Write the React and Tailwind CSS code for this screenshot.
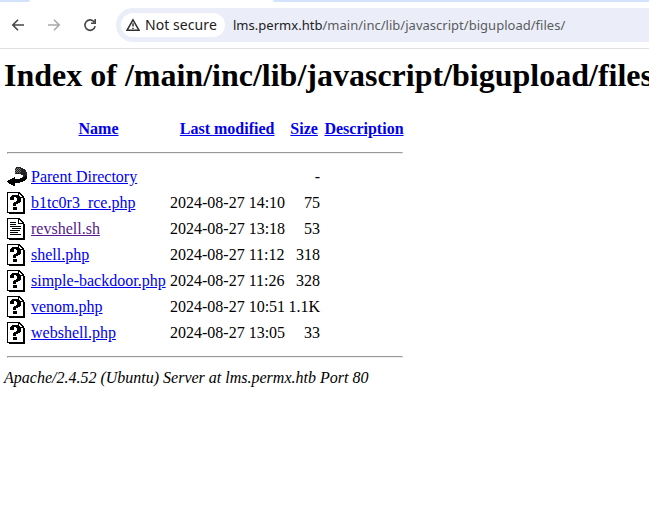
import React from 'react';

const files = [
  ['back', 'Parent Directory', '', '-'],
  ['unknown', 'b1tc0r3_rce.php', '2024-08-27 14:10', '75'],
  ['text', 'revshell.sh', '2024-08-27 13:18', '53'],
  ['unknown', 'shell.php', '2024-08-27 11:12', '318'],
  ['unknown', 'simple-backdoor.php', '2024-08-27 11:26', '328'],
  ['unknown', 'venom.php', '2024-08-27 10:51', '1.1K'],
  ['unknown', 'webshell.php', '2024-08-27 13:05', '33'],
];

function FileIcon({ type }) {
  if (type === 'back') {
    return (
      <svg width="20" height="22" viewBox="0 0 20 22" shapeRendering="crispEdges">
        <path d="M0 15h1v-1h2v-1h2v-1h2v-1h1v2h5v-1h2v-1h1V9h-2V8H8V2h1V1h5v1h2v1h2v1h1v2h1v7h-1v1h-1v1h-2v1h-3v1H8v3H6v-1H4v-1H2v-1H1v-1H0z" fill="#222" />
        <path d="M0 15h1v-1h2v-1h2v-1h2v-1h1v2h5v-1h3v-1h2v-1h2v3h-1v1h-1v1h-2v1h-3v1H8v3H6v-1H4v-1H2v-1H1v-1H0z" fill="#000" />
        <path d="M8 2h1v1H8zM10 2h1v1h-1zM12 2h1v1h-1zM9 3h1v1H9zM11 3h1v1h-1zM13 3h1v1h-1zM8 4h1v1H8zM10 4h1v1h-1zM12 4h1v1h-1zM9 5h1v1H9zM11 5h1v1h-1zM13 5h1v1h-1zM8 6h1v1H8zM10 6h1v1h-1zM12 6h1v1h-1z" fill="#777" />
      </svg>
    );
  }
  return (
    <svg width="20" height="22" viewBox="0 0 20 22" shapeRendering="crispEdges">
      <path d="M2 21.5H18M17.5 6V22" fill="none" stroke="#000" />
      <path d="M.5 .5H12L16.5 5V20.5H.5Z" fill="#fff" stroke="#000" />
      <path d="M11.5 .5V5.5H17M13.5 2v1M15.5 4v1" fill="none" stroke="#000" />
      {type === 'text' ? (
        <path d="M3 4.5h6M3 6.5h6M3 8.5h11M5 10.5h9M3 12.5h10M3 14.5h8M3 16.5h11" stroke="#000" />
      ) : (
        <path d="M3 5h1V4h1V3h6v1h2v1h1v5h-1v1h-2v1H9v2H6v-3h1v-1h2V9h1V6H9V5H7v3H3zM6 15h4v3H6z" fill="#000" />
      )}
    </svg>
  );
}

const columns = 'grid grid-cols-[20px_135px_114.3px_31.7px_80px] gap-x-1 pl-[3px]';

export default function App() {
  return (
    <div className="h-[525px] w-[649px] overflow-hidden bg-white text-black">
      <header className="h-[49px] border-b border-[#dfe1e1] bg-white">
        <div className="flex h-2 justify-between">
          <div className="h-[2px] w-[30px] rounded-br-lg bg-[#d3e3fd]" />
          <div className="h-[2px] w-[376px] rounded-bl-lg bg-[#d3e3fd]" />
        </div>
        <div className="flex h-[34px] items-center pl-[10px]">
          <div className="flex w-[106px] gap-5 text-[#474747]">
            <svg width="16" height="16" viewBox="0 0 16 16" fill="none" stroke="currentColor" strokeWidth="1.6"><path d="M14 8H3M8 2.8 2.8 8 8 13.2" /></svg>
            <svg width="16" height="16" viewBox="0 0 16 16" fill="none" stroke="#a9a9a9" strokeWidth="1.6"><path d="M2 8h11M8 2.8 13.2 8 8 13.2" /></svg>
            <svg width="16" height="16" viewBox="0 0 16 16" fill="none" stroke="currentColor" strokeWidth="1.6"><path d="M13.2 9.2A5.2 5.2 0 1 1 12.3 5M13.2 2v4.3H9" /></svg>
          </div>
          <div className="flex h-[34px] flex-1 items-center rounded-l-full bg-[#ebeef8] pl-[5px] font-['Noto_Sans',sans-serif] text-[14px]">
            <div className="flex h-6 w-[104px] items-center gap-[5px] rounded-full bg-white pl-[5px] text-[#202124]">
              <svg width="14" height="14" viewBox="0 0 14 14" fill="none" stroke="#303030" strokeWidth="1.5"><path d="M7 1.8 13 12.3H1ZM7 5.3v3.3M7 9.7v1.3" /></svg>
              <span className="whitespace-nowrap pb-[2px] tracking-[0.07px]">Not secure</span>
            </div>
            <span className="ml-2 whitespace-nowrap pt-px text-[13px] tracking-[0.02px] text-[#5a5c60]"><span className="text-[#202124]">lms.permx.htb</span>/main/inc/lib/javascript/bigupload/files/</span>
          </div>
        </div>
      </header>
      <main className="pl-1 font-['Liberation_Serif',serif] text-[16px] leading-[18px]">
        <h1 className="pt-[8px] text-[32px] font-bold leading-[37px] whitespace-nowrap">Index of /main/inc/lib/javascript/bigupload/files</h1>
        <div className={columns + ' mt-[26px] text-center font-bold text-[#0000ee] whitespace-nowrap'}>
          <span />
          <span className="underline">Name</span>
          <span className="underline">Last modified</span>
          <span className="underline">Size</span>
          <span className="underline">Description</span>
        </div>
        <hr className="mt-[14px] ml-[3px] h-[2px] w-[396px] border border-[#9a9a9a] border-r-[#eee] border-b-[#eee]" />
        <div className="mt-[10px]">
          {files.map(([type, name, date, size]) => (
            <div key={name} className={columns + ' h-[26px] items-center whitespace-nowrap'}>
              <FileIcon type={type} />
              <span className={type === 'text' ? 'text-[#551a8b] underline' : 'text-[#0000ee] underline'}>{name}</span>
              <span className="text-right">{date}</span>
              <span className="text-right">{size}</span>
            </div>
          ))}
        </div>
        <hr className="mt-[10px] ml-[3px] h-[2px] w-[396px] border border-[#9a9a9a] border-r-[#eee] border-b-[#eee]" />
        <footer className="mt-[11px] italic">Apache/2.4.52 (Ubuntu) Server at lms.permx.htb Port 80</footer>
      </main>
    </div>
  );
}
